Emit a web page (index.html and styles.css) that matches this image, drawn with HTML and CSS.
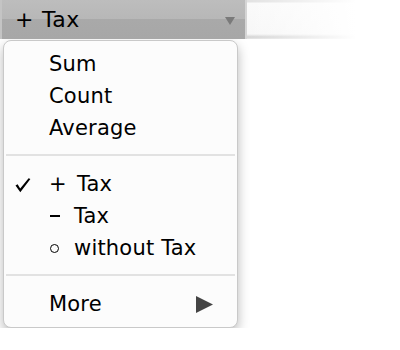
FILE: index.html
```html
<!DOCTYPE html>
<html lang="en">
<head>
  <meta charset="UTF-8">
  <title>Tax menu</title>
  <link rel="stylesheet" href="styles.css">
</head>
<body>
  <div class="toolbar">
    <div class="popup">
      <span class="sign">+</span><span>Tax</span>
      <span class="caret"></span>
    </div>
    <div class="field"></div>
  </div>

  <ul class="menu">
    <li class="item"><span class="check"></span>Sum</li>
    <li class="item"><span class="check"></span>Count</li>
    <li class="item"><span class="check"></span>Average</li>
    <li class="sep"></li>
    <li class="item">
      <span class="check">
        <svg width="16" height="15" viewBox="0 0 16 15"><path d="M0.5 7.5 L2.6 6.3 L5.2 10.6 L13.6 0.2 L15.4 1 L5.3 14.2 Z" fill="#000"/></svg>
      </span>
      <span class="sign">+</span>Tax
    </li>
    <li class="item"><span class="check"></span><span class="sign narrow"><i class="dash"></i></span>Tax</li>
    <li class="item"><span class="check"></span><span class="sign narrow"><i class="ring"></i></span>without Tax</li>
    <li class="sep"></li>
    <li class="item more"><span class="check"></span>More
      <svg class="arrow" width="17" height="17" viewBox="0 0 17 17"><polygon points="0,0 17,8.5 0,17" fill="#444"/></svg>
    </li>
  </ul>
</body>
</html>
```

FILE: styles.css
```css
body {
  margin: 0;
  background: #fff;
  font-family: "DejaVu Sans", sans-serif;
  font-size: 21px;
  letter-spacing: 0.2px;
  color: #000;
}
.toolbar {
  display: flex;
  height: 39px;
}
.popup {
  width: 230px;
  padding-left: 13px;
  display: flex;
  align-items: center;
  font-size: 22px;
  letter-spacing: 0.5px;
  background: linear-gradient(#bdbdbd, #b7b7b7 50%, #a9a9a9 50%, #a7a7a7);
  border-left: 2px solid #c4c4c4;
}
.popup .sign {
  width: 27px;
  display: inline-block;
}
.caret {
  margin-left: auto;
  margin-right: 10px;
  width: 0;
  height: 0;
  border-left: 5px solid transparent;
  border-right: 5px solid transparent;
  border-top: 8px solid #7a7a7a;
  margin-top: 2px;
}
.field {
  width: 115px;
  background:
    linear-gradient(to right, rgba(255,255,255,0), #fff 95%),
    linear-gradient(#e2e2e2 0, #e2e2e2 2px, #fafafa 3px, #f7f7f7 34px, #d2d2d2 37px, #e6e6e6 39px);
  border-left: 2px solid #d5d5d5;
}
.menu {
  list-style: none;
  margin: 1px 0 0 3px;
  padding: 7px 0 7px;
  width: 233px;
  background: #fcfcfc;
  border: 1px solid #c9c9c9;
  border-radius: 8px;
  box-shadow: 0 5px 12px rgba(0, 0, 0, 0.28);
}
.item {
  display: flex;
  align-items: center;
  height: 32px;
  padding-left: 11px;
}
.check {
  width: 34px;
  flex-shrink: 0;
  display: flex;
  align-items: center;
  padding-top: 2px;
  height: 30px;
}
.item .sign {
  width: 28px;
  display: inline-block;
}
.item .sign.narrow {
  width: 25px;
}
.dash {
  display: inline-block;
  width: 10px;
  height: 2px;
  background: #000;
  vertical-align: 6px;
  margin-left: 1px;
}
.ring {
  display: inline-block;
  width: 7px;
  height: 7px;
  border: 1.5px solid #000;
  border-radius: 50%;
  vertical-align: 2px;
  margin-left: 1px;
}
.sep {
  height: 2px;
  background: #e2e2e2;
  margin: 10px 2px 12px;
}
.sep + .item {
  margin-top: 1px;
}
.more .arrow {
  margin-left: auto;
  margin-right: 24px;
}
```
